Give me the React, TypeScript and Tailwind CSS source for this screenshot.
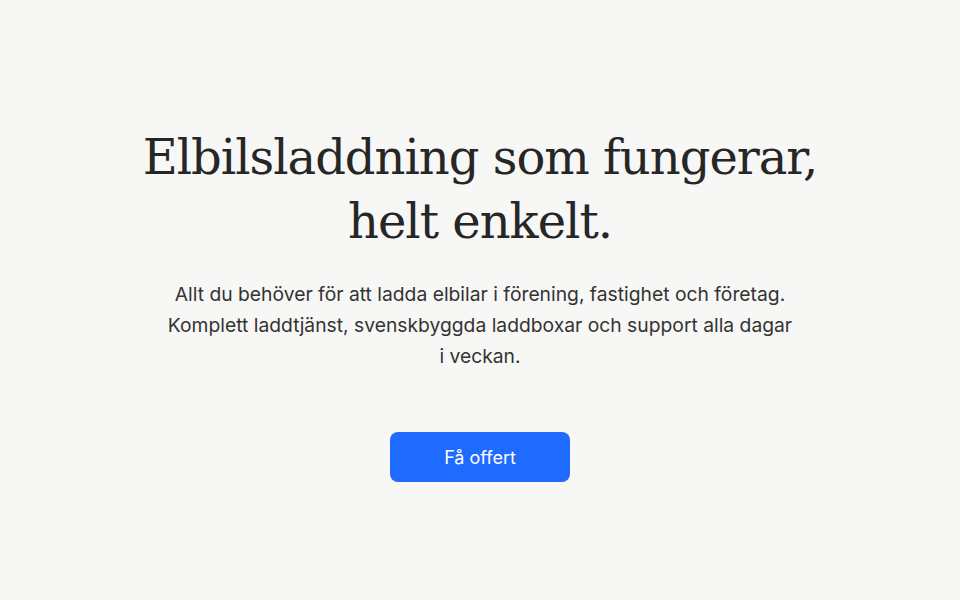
export default function App() {
  return (
    <div className="min-h-screen bg-[#f7f7f5] flex flex-col items-center px-6 pt-[125px] font-['Inter',sans-serif]">
      <h1 className="text-center text-[48px] leading-[64px] text-[#262626] font-['DejaVu_Serif','Liberation_Serif',serif] tracking-[-1px]">
        Elbilsladdning som fungerar,
        <br />
        helt enkelt.
      </h1>
      <p className="mt-[26px] max-w-[634px] text-center text-[19.3px] leading-[31px] text-[#333]">
        Allt du behöver för att ladda elbilar i förening, fastighet och företag. Komplett laddtjänst, svenskbyggda laddboxar och support alla dagar i veckan.
      </p>
      <button className="mt-[60px] w-[180px] h-[50px] rounded-lg bg-[#1f6bff] text-white text-[18px]">
        Få offert
      </button>
    </div>
  )
}
